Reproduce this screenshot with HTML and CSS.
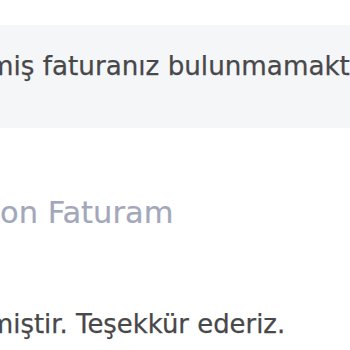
FILE: index.html
```html
<!DOCTYPE html>
<html lang="tr">
<head>
<meta charset="utf-8">
<title>Faturalar</title>
<link rel="stylesheet" href="styles.css">
</head>
<body>
<div class="page">
  <div class="notice">
    <p class="notice-text">mi&#351; faturan&#305;z bulunmamaktad&#305;r.</p>
  </div>
  <h2 class="title">on Faturam</h2>
  <p class="message">mi&#351;tir. Te&#351;ekk&uuml;r ederiz.</p>
</div>
</body>
</html>
```
FILE: styles.css
```css
html, body {
  margin: 0;
  padding: 0;
  background: #ffffff;
  overflow: hidden;
}
.page {
  width: 350px;
  height: 350px;
  overflow: hidden;
  padding-top: 25px;
  box-sizing: border-box;
  font-family: "DejaVu Sans", "Noto Sans", sans-serif;
}
.notice {
  background: #f5f6f8;
  height: 103px;
  display: flex;
  align-items: flex-start;
}
.notice-text {
  margin: 24px 0 0 -12px;
  font-size: 26.2px;
  line-height: 34px;
  color: #48484a;
  -webkit-text-stroke: 0.25px #48484a;
  white-space: nowrap;
}
.title {
  margin: 67px 0 0 0;
  font-size: 30.5px;
  font-weight: 400;
  line-height: 36px;
  color: #a2a7bb;
  -webkit-text-stroke: 0.2px #a2a7bb;
  white-space: nowrap;
}
.message {
  margin: 76px 0 0 -12px;
  font-size: 25.9px;
  line-height: 34px;
  color: #48484a;
  -webkit-text-stroke: 0.25px #48484a;
  white-space: nowrap;
}
```
